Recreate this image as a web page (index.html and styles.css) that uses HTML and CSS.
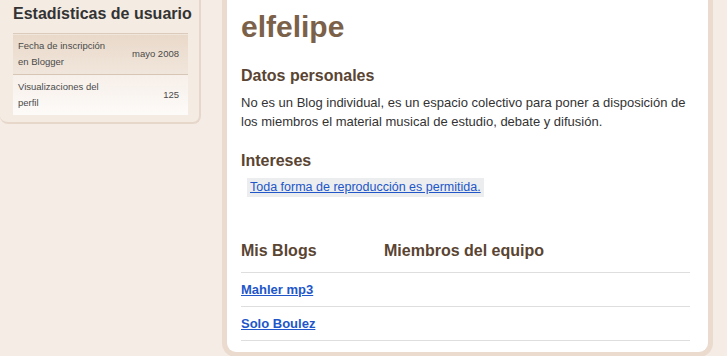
FILE: index.html
```html
<!DOCTYPE html>
<html lang="es">
<head>
    <meta charset="UTF-8">
    <title>Perfil de Blogger: elfelipe</title>
    <link rel="stylesheet" href="styles.css">
</head>
<body>
    <div class="sidebar">
        <div class="stats-box">
            <h2 class="stats-title">Estadísticas de usuario</h2>
            <table class="stats-table">
                <tr class="row-first">
                    <td class="label">Fecha de inscripción en Blogger</td>
                    <td class="value">mayo 2008</td>
                </tr>
                <tr class="row-second">
                    <td class="label">Visualizaciones del perfil</td>
                    <td class="value">125</td>
                </tr>
            </table>
        </div>
    </div>

    <div class="main">
        <h1 class="profile-name">elfelipe</h1>

        <h3 class="section-title">Datos personales</h3>
        <p class="about">No es un Blog individual, es un espacio colectivo para poner a disposición de los miembros el material musical de estudio, debate y difusión.</p>

        <h3 class="section-title">Intereses</h3>
        <div class="interests">
            <a href="#">Toda forma de reproducción es permitida.</a>
        </div>

        <div class="lists">
            <div class="list-col">
                <h3 class="section-title">Mis Blogs</h3>
                <ul class="blog-list">
                    <li><a href="#">Mahler mp3</a></li>
                    <li><a href="#">Solo Boulez</a></li>
                </ul>
            </div>
            <div class="list-col team">
                <h3 class="section-title">Miembros del equipo</h3>
            </div>
        </div>
    </div>
</body>
</html>
```

FILE: styles.css
```css
body {
    margin: 0;
    background-color: #f5ece6;
    font-family: "Liberation Sans", Arial, sans-serif;
    display: flex;
    align-items: flex-start;
}
.sidebar {
    width: 201px;
    flex-shrink: 0;
}
.stats-box {
    background-color: #f4ebe3;
    border: 2px solid #e6d7ca;
    border-top: none;
    border-left: none;
    border-radius: 0 0 8px 8px;
    padding: 3px 11px 7px 13px;
}
.stats-title {
    margin: 0 0 9px;
    font-size: 16px;
    line-height: 21px;
    font-weight: bold;
    color: #333;
    white-space: nowrap;
}
.stats-table {
    width: 100%;
    border-collapse: collapse;
    font-size: 9.5px;
    color: #4a4a4a;
}
.stats-table td {
    padding: 4px 5px;
    line-height: 16px;
    vertical-align: middle;
}
.stats-table .label {
    width: 92px;
}
.stats-table .value {
    text-align: right;
    white-space: nowrap;
    padding-right: 9px;
}
.row-first {
    background: linear-gradient(#e9d9c9, #f1e6dc);
    border-top: 1px solid #dccbbb;
    border-bottom: 1px solid #d7c6b6;
}
.row-first td,
.row-second td {
    height: 32px;
}
.row-second {
    background: linear-gradient(#f7efe9, #fdfbf9);
}
.main {
    margin-left: 21px;
    width: 449px;
    flex-shrink: 0;
    min-height: 341px;
    background-color: #fff;
    border: 5px solid #eadbce;
    border-top: none;
    border-radius: 0 0 14px 14px;
    padding: 2px 18px 9px 14px;
}
.profile-name {
    margin: 0 0 13px;
    font-size: 30px;
    line-height: 50px;
    color: #7b6149;
}
.section-title {
    margin: 0;
    font-size: 16px;
    line-height: 22px;
    color: #5a4432;
}
.about {
    margin: 6px 0 19px;
    font-size: 13px;
    line-height: 19px;
    color: #333;
}
.interests {
    margin: 5px 0 43px 6px;
}
.interests a {
    display: inline-block;
    background-color: #ecedee;
    padding: 1px 3px;
    font-size: 12.5px;
    line-height: 17px;
    color: #2156c9;
}
.lists {
    display: flex;
    position: relative;
}
.list-col {
    flex: 1;
}
.team {
    position: absolute;
    left: 143px;
    top: 0;
}
.blog-list {
    list-style: none;
    margin: 10px 0 0;
    padding: 0;
}
.blog-list li {
    border-top: 1px solid #dedede;
    padding: 8px 0;
    font-size: 13px;
    line-height: 17px;
}
.blog-list li:last-child {
    border-bottom: 1px solid #dedede;
}
.blog-list a {
    font-weight: bold;
    color: #2156c9;
}
```
